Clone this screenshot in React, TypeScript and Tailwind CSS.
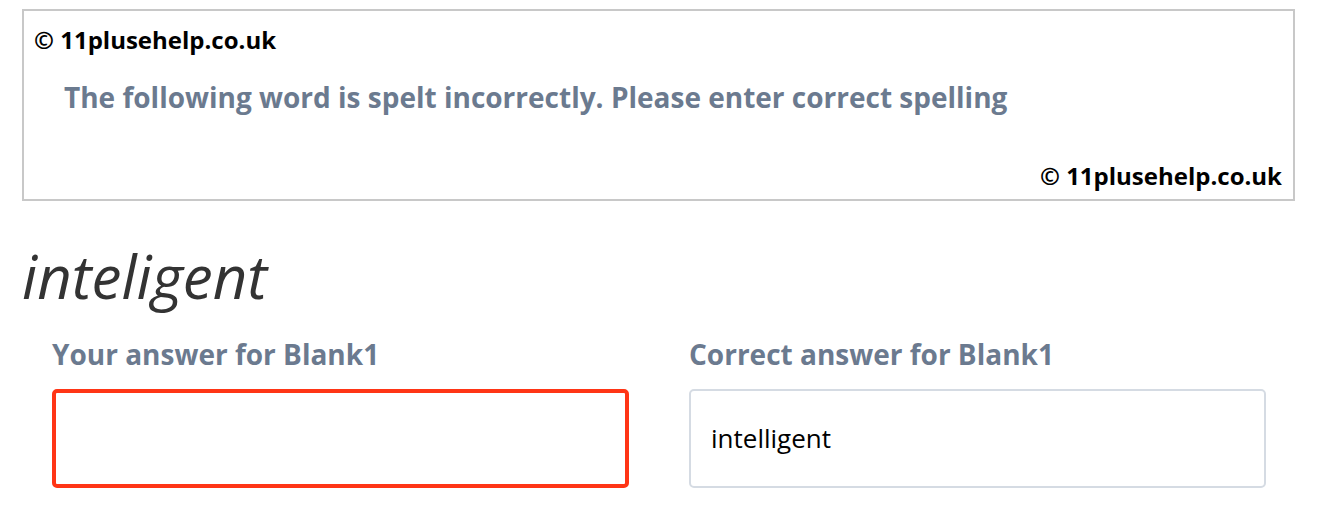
import React from "react";

const Copyright = ({ className }: { className?: string }) => (
  <div className={`text-[24px] leading-[32px] font-bold text-black ${className ?? ""}`}>
    © 11plusehelp.co.uk
  </div>
);

export default function App() {
  return (
    <div className="min-h-[520px] bg-white pt-[9px] font-['Open_Sans',sans-serif]">
      {/* Question box */}
      <div className="ml-[22px] flex h-[192px] w-[1273px] flex-col border-2 border-[#c8c8c8] pl-[10px] pr-[11px] pt-[13px] pb-[7px]">
        <Copyright />
        <h2 className="mt-[22px] pl-[30px] text-[28px] leading-[38px] font-bold text-[#6b7a8f]">
          The following word is spelt incorrectly. Please enter correct spelling
        </h2>
        <div className="flex-1" />
        <Copyright className="self-end" />
      </div>

      {/* Misspelt word */}
      <div className="ml-[22px] mt-[39px] text-[60px] leading-[72px] italic text-[#333333]">
        inteligent
      </div>

      {/* Answers */}
      <div className="ml-[52px] mt-[23px] flex gap-[60px]">
        <div className="w-[577px]">
          <label className="block text-[28px] leading-[38px] font-bold text-[#6b7a8f]">
            Your answer for Blank1
          </label>
          <input
            type="text"
            className="mt-[16px] block h-[99px] w-full rounded-[5px] border-4 border-[#ff3516] px-[20px] text-[26px] text-black outline-none"
          />
        </div>
        <div className="w-[577px]">
          <label className="block text-[28px] leading-[38px] font-bold text-[#6b7a8f]">
            Correct answer for Blank1
          </label>
          <div className="mt-[16px] flex h-[99px] w-full items-center rounded-[5px] border-2 border-[#d5dbe3] px-[20px] text-[26px] text-black">
            intelligent
          </div>
        </div>
      </div>
    </div>
  );
}
